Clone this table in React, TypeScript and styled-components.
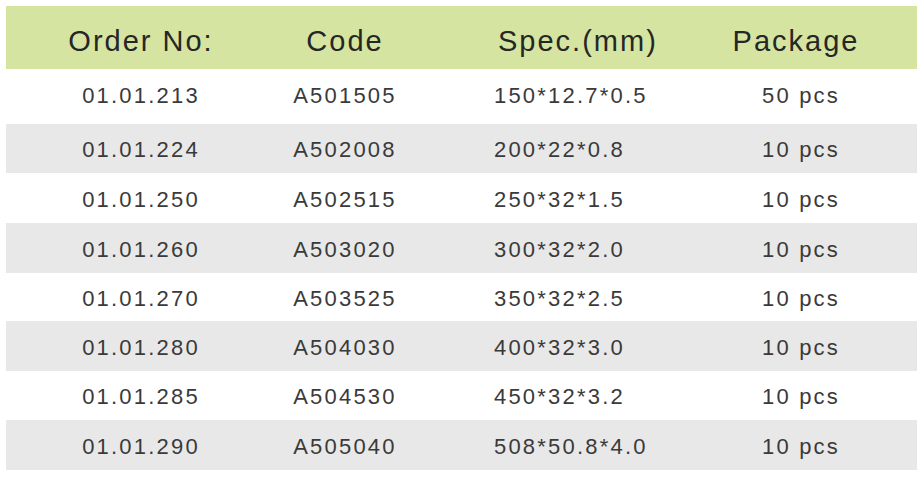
import React from "react";
import styled, { createGlobalStyle } from "styled-components";

const Global = createGlobalStyle`
  html, body { margin: 0; padding: 0; background: #ffffff; }
  body { font-family: "Liberation Sans", Arial, sans-serif; }
`;

const Table = styled.div`
  margin: 6px 0 0 6px;
  width: 911px;
  display: flex;
  flex-direction: column;
`;

const cols = "270px 138px 286px 192px";

const HeaderRow = styled.div`
  display: grid;
  grid-template-columns: ${cols};
  height: 63px;
  padding-top: 7px;
  box-sizing: border-box;
  background: #d5e4a1;
  align-items: center;
`;

const Row = styled.div<{ $h: number; $shade: boolean; $shift: number }>`
  display: grid;
  grid-template-columns: ${cols};
  height: ${(p) => p.$h}px;
  box-sizing: border-box;
  padding-top: ${(p) => (p.$shift > 0 ? p.$shift : 0)}px;
  padding-bottom: ${(p) => (p.$shift < 0 ? -p.$shift : 0)}px;
  background: ${(p) => (p.$shade ? "#e8e8e8" : "#ffffff")};
  align-items: center;
`;

const HeadCell = styled.div<{ $left?: number }>`
  font-size: 29px;
  letter-spacing: 2px;
  color: #262626;
  text-align: ${(p) => (p.$left !== undefined ? "left" : "center")};
  padding-left: ${(p) => p.$left ?? 0}px;
  white-space: nowrap;
`;

const Cell = styled.div<{ $left?: number }>`
  font-size: 22px;
  letter-spacing: 2.2px;
  color: #3a3a3a;
  text-align: ${(p) => (p.$left !== undefined ? "left" : "center")};
  padding-left: ${(p) => p.$left ?? 0}px;
  white-space: nowrap;
`;

const rows = [
  ["01.01.213", "A501505", "150*12.7*0.5", "50 pcs", 55],
  ["01.01.224", "A502008", "200*22*0.8", "10 pcs", 49],
  ["01.01.250", "A502515", "250*32*1.5", "10 pcs", 50],
  ["01.01.260", "A503020", "300*32*2.0", "10 pcs", 50],
  ["01.01.270", "A503525", "350*32*2.5", "10 pcs", 48],
  ["01.01.280", "A504030", "400*32*3.0", "10 pcs", 50],
  ["01.01.285", "A504530", "450*32*3.2", "10 pcs", 49],
  ["01.01.290", "A505040", "508*50.8*4.0", "10 pcs", 50],
] as const;

export default function App() {
  return (
    <>
      <Global />
      <Table>
        <HeaderRow>
          <HeadCell>Order No:</HeadCell>
          <HeadCell>Code</HeadCell>
          <HeadCell $left={84}>Spec.(mm)</HeadCell>
          <HeadCell>Package</HeadCell>
        </HeaderRow>
        {rows.map((r, i) => (
          <Row key={r[0]} $h={r[4]} $shade={i % 2 === 1} $shift={i === 0 ? -2 : 3}>
            <Cell>{r[0]}</Cell>
            <Cell>{r[1]}</Cell>
            <Cell $left={80}>{r[2]}</Cell>
            <Cell $left={62}>{r[3]}</Cell>
          </Row>
        ))}
      </Table>
    </>
  );
}
